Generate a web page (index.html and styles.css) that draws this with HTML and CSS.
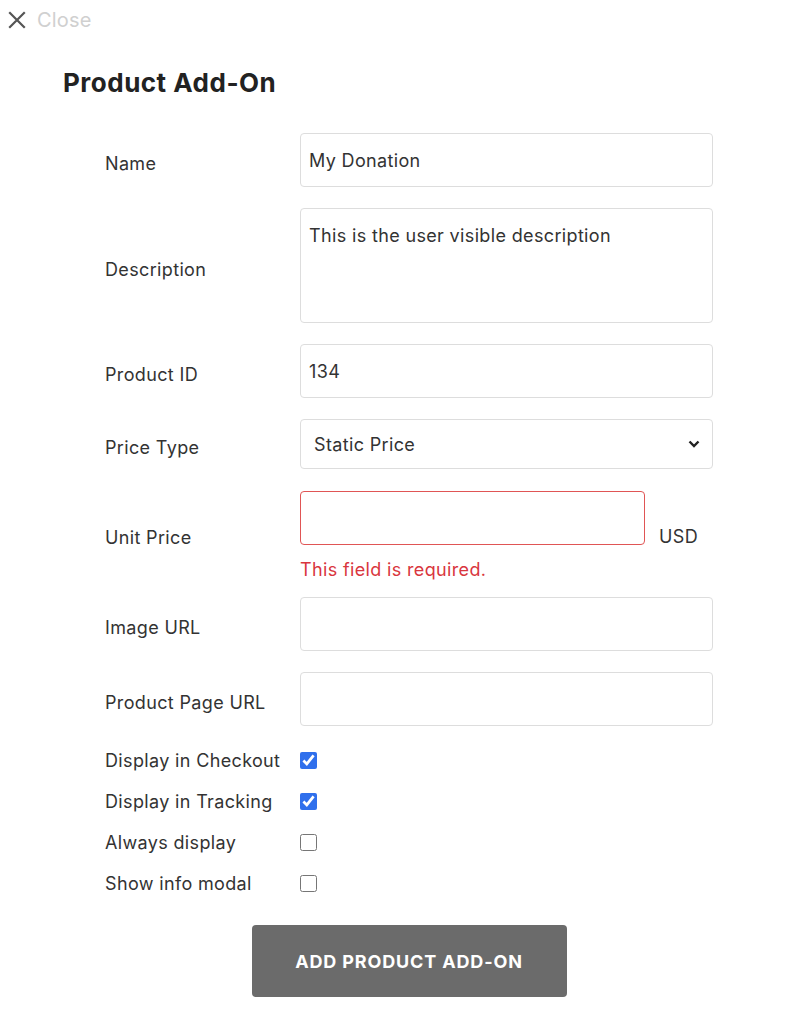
FILE: index.html
```html
<!DOCTYPE html>
<html>
<head>
<meta charset="utf-8">
<link rel="stylesheet" href="styles.css">
</head>
<body>
<div class="close">
  <svg class="close-icon" width="18" height="18" viewBox="0 0 18 18"><path d="M2 2L16 16M16 2L2 16" stroke="#555" stroke-width="2.2" stroke-linecap="square"/></svg>
  <span class="close-text">Close</span>
</div>
<h1 class="title">Product Add-On</h1>
<form class="form">
  <label class="label">Name</label>
  <input class="field" type="text" value="My Donation">

  <label class="label">Description</label>
  <textarea class="field area">This is the user visible description</textarea>

  <label class="label">Product ID</label>
  <input class="field" type="text" value="134">

  <label class="label">Price Type</label>
  <div class="select-wrap">
    <select class="field select"><option>Static Price</option></select>
    <svg class="chevron" width="12" height="8" viewBox="0 0 12 8"><path d="M1.5 1.5L6 6L10.5 1.5" fill="none" stroke="#222" stroke-width="2.4"/></svg>
  </div>

  <label class="label price-label">Unit Price</label>
  <div class="price-row">
    <div class="price-col">
      <input class="field error-field" type="text">
      <div class="error">This field is required.</div>
    </div>
    <span class="currency">USD</span>
  </div>

  <label class="label">Image URL</label>
  <input class="field" type="text">

  <label class="label">Product Page URL</label>
  <input class="field" type="text">

  <label class="label check-label first">Display in Checkout</label>
  <div class="check-cell first"><input class="check" type="checkbox" checked></div>

  <label class="label check-label">Display in Tracking</label>
  <div class="check-cell"><input class="check" type="checkbox" checked></div>

  <label class="label check-label">Always display</label>
  <div class="check-cell"><input class="check" type="checkbox"></div>

  <label class="label check-label">Show info modal</label>
  <div class="check-cell"><input class="check" type="checkbox"></div>

  <div class="actions">
    <button type="button" class="submit">ADD PRODUCT ADD-ON</button>
  </div>
</form>
</body>
</html>
```
FILE: styles.css
```css
* { box-sizing: border-box; }
body {
  margin: 0;
  font-family: Inter, "Noto Sans", sans-serif;
  color: #333;
  background: #fff;
}
.close {
  display: flex;
  align-items: center;
  gap: 11px;
  padding: 10px 0 0 8px;
  height: 30px;
}
.close-icon { display: block; }
.close-text {
  font-size: 20px;
  color: #d0d0d0;
  letter-spacing: 0.2px;
}
.title {
  margin: 39px 0 0 63px;
  font-size: 26px;
  font-weight: 700;
  color: #222;
  line-height: 28px;
  letter-spacing: 0.5px;
}
.form {
  display: grid;
  grid-template-columns: 195px 413px;
  row-gap: 21px;
  margin: 36px 0 0 105px;
  width: 608px;
}
.label {
  display: flex;
  align-items: center;
  font-size: 18px;
  letter-spacing: 0.35px;
  color: #333;
  padding-top: 7px;
}
.field {
  display: block;
  width: 100%;
  height: 54px;
  border: 1px solid #ddd;
  border-radius: 4px;
  padding: 0 8px;
  font-family: Inter, "Noto Sans", sans-serif;
  font-size: 18px;
  letter-spacing: 0.35px;
  color: #333;
  background: #fff;
  outline: none;
}
.area {
  height: 115px;
  padding: 16px 8px;
  resize: none;
  line-height: 22px;
}
.select-wrap { position: relative; }
.select {
  appearance: none;
  -webkit-appearance: none;
  height: 50px;
  padding: 0 13px;
}
.chevron {
  position: absolute;
  right: 13px;
  top: 21px;
}
.price-row {
  display: flex;
  align-items: center;
  gap: 14px;
  margin-top: 1px;
}
.price-label { margin-top: 1px; }
.price-col { width: 345px; }
.error-field { border-color: #e05555; }
.error {
  margin-top: 19px;
  font-size: 18px;
  letter-spacing: 0.35px;
  color: #d9363e;
  line-height: 12px;
}
.currency {
  font-size: 18px;
  letter-spacing: 0.35px;
  padding-top: 5px;
}
.check-label {
  padding-top: 0;
  height: 20px;
}
.check-cell {
  display: flex;
  align-items: center;
  height: 20px;
}
.first { margin-top: 3px; }
.check {
  margin: 0;
  width: 17px;
  height: 17px;
  accent-color: #2f6fec;
}
.actions {
  grid-column: 1 / -1;
  display: flex;
  justify-content: center;
  margin-top: 11px;
}
.submit {
  width: 315px;
  height: 72px;
  border: none;
  border-radius: 4px;
  background: #6b6b6b;
  color: #fff;
  font-family: Inter, "Noto Sans", sans-serif;
  font-weight: 700;
  font-size: 18px;
  letter-spacing: 0.85px;
}
```
